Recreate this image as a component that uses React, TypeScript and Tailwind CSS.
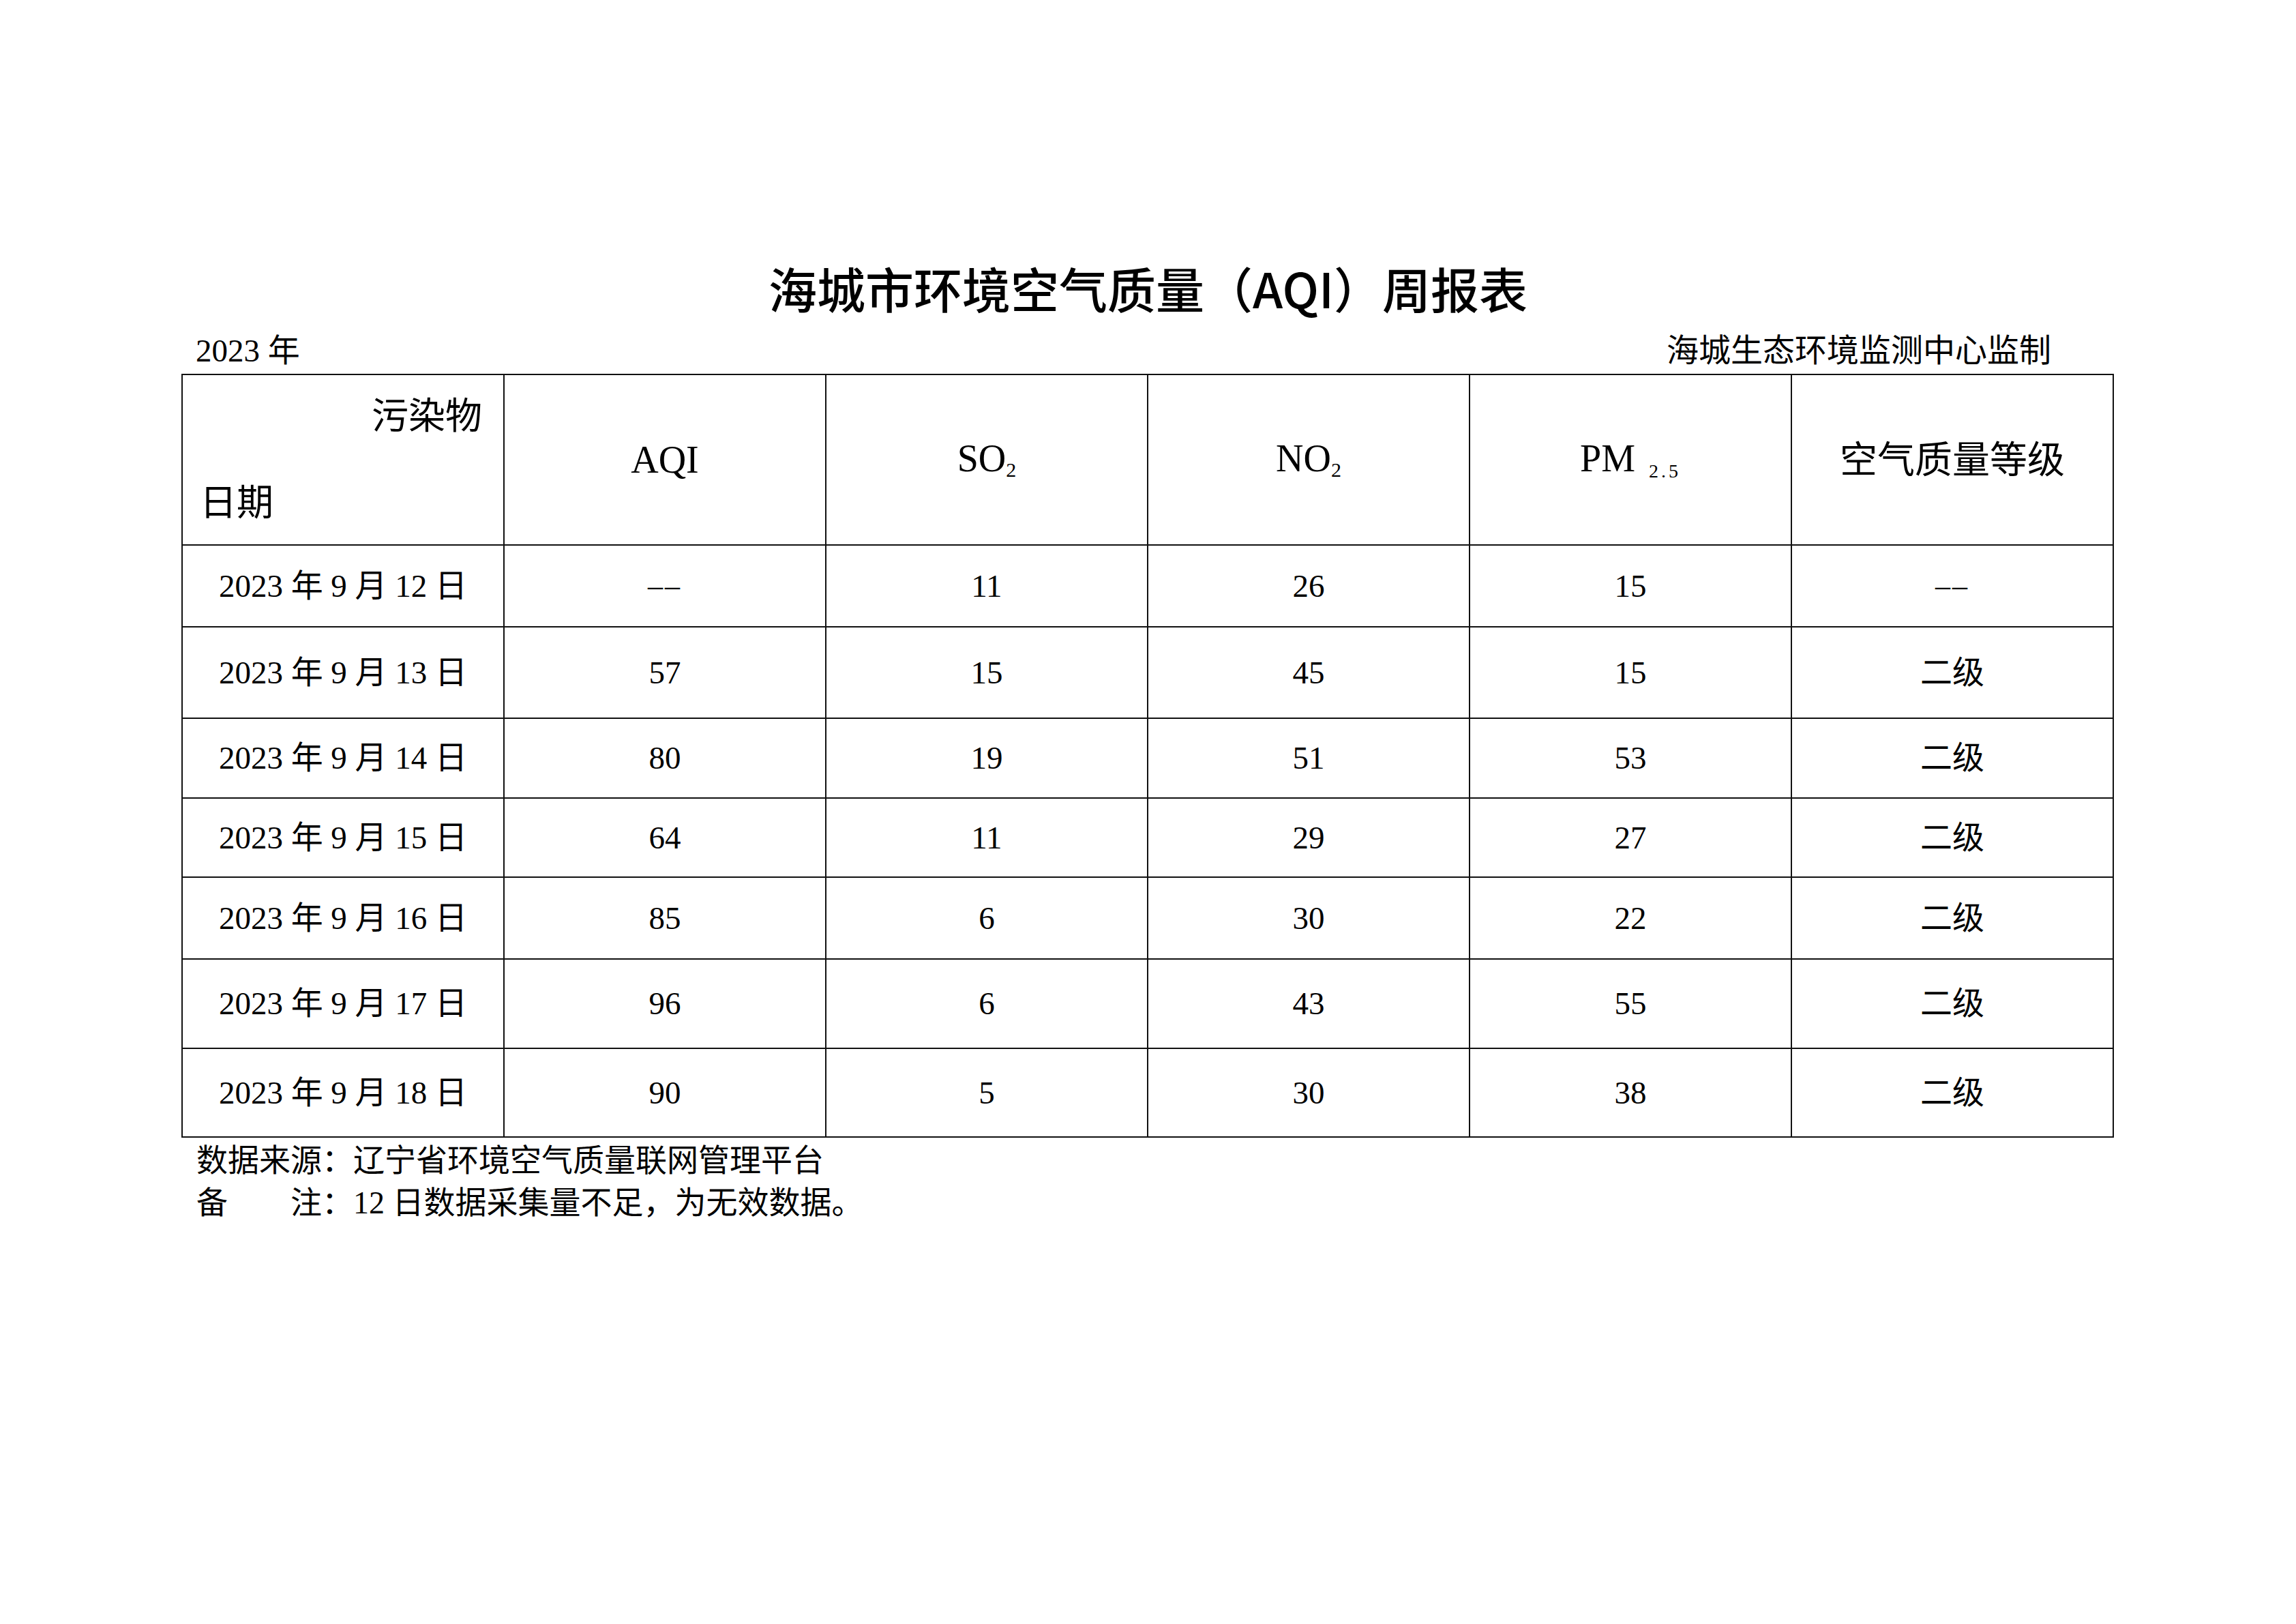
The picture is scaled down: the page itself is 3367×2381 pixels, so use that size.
import React from "react";

type Row = { date: string; vals: string[]; h: string };

const rows: Row[] = [
  { date: "2023 年 9 月 12 日", vals: ["––", "11", "26", "15", "––"], h: "h-[120px]" },
  { date: "2023 年 9 月 13 日", vals: ["57", "15", "45", "15", "二级"], h: "h-[134px]" },
  { date: "2023 年 9 月 14 日", vals: ["80", "19", "51", "53", "二级"], h: "h-[117px]" },
  { date: "2023 年 9 月 15 日", vals: ["64", "11", "29", "27", "二级"], h: "h-[116px]" },
  { date: "2023 年 9 月 16 日", vals: ["85", "6", "30", "22", "二级"], h: "h-[120px]" },
  { date: "2023 年 9 月 17 日", vals: ["96", "6", "43", "55", "二级"], h: "h-[131px]" },
  { date: "2023 年 9 月 18 日", vals: ["90", "5", "30", "38", "二级"], h: "h-[130px]" },
];

const cell =
  "border-r-2 border-b-2 border-[#111] flex items-center justify-center";

export default function App() {
  return (
    <div className="w-[3367px] h-[2381px] bg-white overflow-hidden text-black font-['Liberation_Serif','Noto_Sans_CJK_SC',serif]">
      <div className="pt-[386px]">
        <h1 className="h-[70px] text-center text-[71px] leading-[70px] font-medium font-['Noto_Sans_CJK_SC',sans-serif]">
          海城市环境空气质量（AQI）周报表
        </h1>
      </div>
      <div className="mx-[266px] w-[2834px]">
        <div className="mt-[35px] h-[47px] flex items-center justify-between pl-[21px] pr-[92px] text-[47px] leading-none">
          <span>2023 年</span>
          <span>海城生态环境监测中心监制</span>
        </div>
        <div className="mt-[10px] grid grid-cols-[repeat(6,472px)] border-l-2 border-t-2 border-[#111]">
          <div className="border-r-2 border-b-2 border-[#111] h-[250px] flex flex-col justify-between pt-[34px] pb-[33px] pl-[25px] pr-[31px] text-[54px] leading-none">
            <span className="self-end">污染物</span>
            <span className="self-start">日期</span>
          </div>
          <div className={`${cell} h-[250px] text-[56px] leading-none`}>AQI</div>
          <div className={`${cell} h-[250px] text-[56px] leading-none`}>
            <span>
              SO<span className="text-[30px] align-[-8px]">2</span>
            </span>
          </div>
          <div className={`${cell} h-[250px] text-[56px] leading-none`}>
            <span>
              NO<span className="text-[30px] align-[-8px]">2</span>
            </span>
          </div>
          <div className={`${cell} h-[250px] text-[56px] leading-none`}>
            <span>
              PM{" "}
              <span className="ml-[6px] text-[28px] align-[-9px] tracking-[4px]">2.5</span>
            </span>
          </div>
          <div className={`${cell} h-[250px] text-[55px] leading-none`}>空气质量等级</div>

          {rows.map((r) => (
            <React.Fragment key={r.date}>
              <div className={`${cell} ${r.h} text-[47px] leading-none`}>{r.date}</div>
              {r.vals.map((v, i) => (
                <div key={i} className={`${cell} ${r.h} text-[47px] leading-none`}>
                  <span className={v === "––" ? "tracking-[3px] text-[44px]" : ""}>{v}</span>
                </div>
              ))}
            </React.Fragment>
          ))}
        </div>
        <div className="pl-[22px] pt-[3px] text-[46px] leading-[62px]">
          <div>数据来源：辽宁省环境空气质量联网管理平台</div>
          <div>备　　注：12 日数据采集量不足，为无效数据。</div>
        </div>
      </div>
    </div>
  );
}
